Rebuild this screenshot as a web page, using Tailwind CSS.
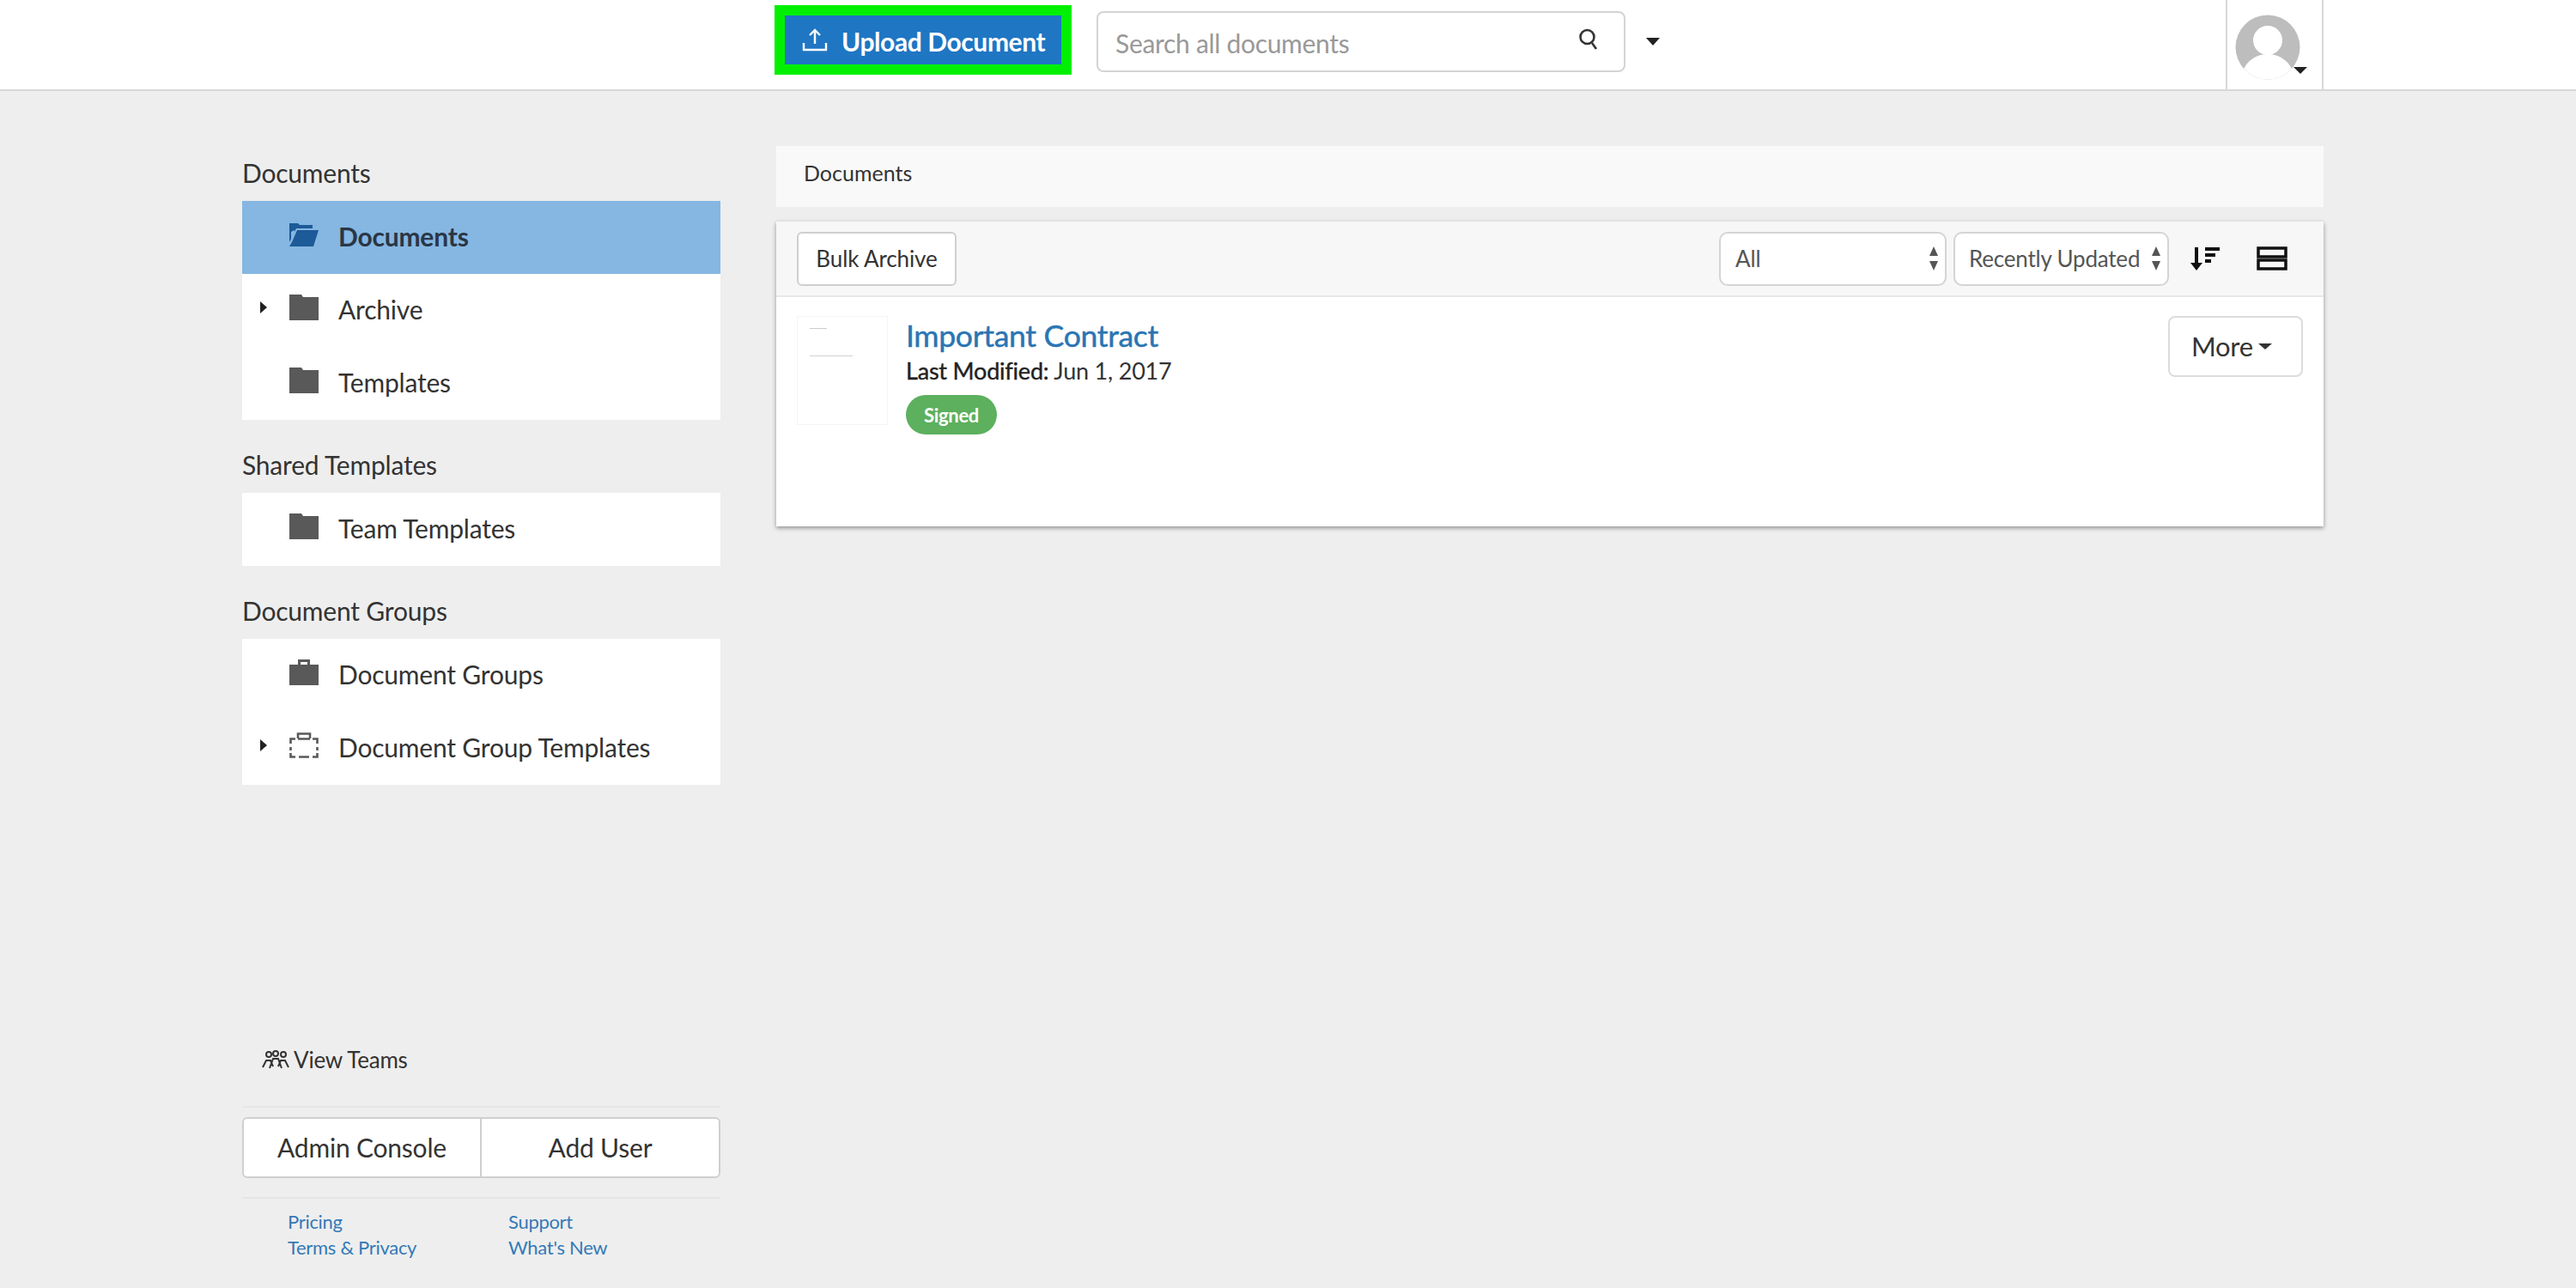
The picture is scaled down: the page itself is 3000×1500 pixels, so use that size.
<!DOCTYPE html>
<html lang="en">
<head>
    <meta charset="UTF-8">
    <title>Documents</title>
    <script src="https://cdn.jsdelivr.net/npm/@tailwindcss/browser@4"></script>
</head>
<body class="bg-[#eeeeee] h-[1500px] w-[3000px] overflow-hidden text-[#333333] [font-family:Lato,sans-serif]">
    <!-- Top bar -->
    <header class="h-[106px] bg-white border-b-2 border-[#d8d8d8] flex items-start pl-[902px]">
        <div class="mt-[6px] w-[346px] h-[81px] border-[12px] border-[#00f000] bg-[#1f76c3] flex items-center text-white font-bold text-[30px] tracking-[-0.4px] pl-[20px] pt-[3px]">
            <svg class="w-[30px] h-[30px] mr-[16px] mb-[5px]" viewBox="0 0 30 30" fill="none" stroke="white" stroke-width="2.4"><path d="M15 20V4M9 10l6-6 6 6"/><path d="M2 19v8h26v-8" /></svg>
            Upload Document
        </div>
        <div class="mt-[13px] ml-[29px] w-[616px] h-[71px] bg-white border-2 border-[#d4d4d4] rounded-[8px] flex items-center justify-between pl-[20px] pr-[28px]">
            <span class="text-[#999999] text-[30px] tracking-[-0.3px] pt-[3px]">Search all documents</span>
            <svg class="w-[26px] h-[28px] mb-[6px]" viewBox="0 0 26 28" fill="none" stroke="#333333" stroke-width="2.6"><circle cx="11.500" cy="11" r="8"/><path d="M17 18l5 7"/></svg>
        </div>
        <div class="mt-[44px] ml-[24px] w-0 h-0 border-x-[8px] border-x-transparent border-t-[9px] border-t-[#222222]"></div>
        <div class="ml-auto mr-[294px] w-[114px] h-[104px] bg-white border-x-2 border-[#d8d8d8] relative">
            <svg class="absolute left-[9px] top-[17px] w-[76px] h-[76px]" viewBox="0 0 76 76"><defs><clipPath id="c"><circle cx="38" cy="38" r="37.500"/></clipPath></defs><circle cx="38" cy="38" r="37.500" fill="#bdbdbd"/><g clip-path="url(#c)" fill="white"><circle cx="38" cy="30" r="17"/><ellipse cx="38" cy="73" rx="30" ry="27"/></g></svg>
            <div class="absolute left-[77px] top-[78px] w-0 h-0 border-x-[8px] border-x-transparent border-t-[8px] border-t-[#222222]"></div>
        </div>
    </header>

    <div class="flex pl-[282px] h-[1394px]">
        <!-- Sidebar -->
        <aside class="w-[557px] h-full flex flex-col pt-[78px] pb-[32px]">
            <h3 class="text-[30px] leading-[34px] tracking-[-0.2px] mb-[16px]">Documents</h3>
            <ul class="bg-white text-[30px] tracking-[-0.2px]">
                <li class="h-[85px] bg-[#85b7e2] flex items-center pl-[55px] pb-[2px] font-bold text-[#2a3645]">
                    <svg class="w-[34px] h-[30px] mr-[23px] mb-[6px]" viewBox="0 0 34 30" fill="#1c5a98"><path d="M0 2h10l2 2h15v4H8L0 24z"/><path d="M9 10h25l-6 19H0l3-5z"/><path d="M2 12l4-2v3l-4 9z" fill="#85b7e2"/></svg>
                    Documents
                </li>
                <li class="h-[85px] flex items-center pl-[21px] pb-[2px]">
                    <span class="w-0 h-0 mr-[26px] mb-[6px] border-y-[7px] border-y-transparent border-l-[8px] border-l-[#222222]"></span>
                    <svg class="w-[34px] h-[30px] mr-[23px] mb-[6px]" viewBox="0 0 34 30" fill="#595959"><path d="M0 0h14l2 3h18v27H0z"/></svg>
                    Archive
                </li>
                <li class="h-[85px] flex items-center pl-[55px] pb-[2px]">
                    <svg class="w-[34px] h-[30px] mr-[23px] mb-[6px]" viewBox="0 0 34 30" fill="#595959"><path d="M0 0h14l2 3h18v27H0z"/></svg>
                    Templates
                </li>
            </ul>

            <h3 class="mt-[35px] text-[30px] leading-[34px] tracking-[-0.2px] mb-[16px]">Shared Templates</h3>
            <ul class="bg-white text-[30px] tracking-[-0.2px]">
                <li class="h-[85px] flex items-center pl-[55px] pb-[2px]">
                    <svg class="w-[34px] h-[30px] mr-[23px] mb-[6px]" viewBox="0 0 34 30" fill="#595959"><path d="M0 0h14l2 3h18v27H0z"/></svg>
                    Team Templates
                </li>
            </ul>

            <h3 class="mt-[35px] text-[30px] leading-[34px] tracking-[-0.2px] mb-[16px]">Document Groups</h3>
            <ul class="bg-white text-[30px] tracking-[-0.2px]">
                <li class="h-[85px] flex items-center pl-[55px] pb-[2px]">
                    <svg class="w-[34px] h-[30px] mr-[23px] mb-[6px]" viewBox="0 0 34 30" fill="#595959"><path fill-rule="evenodd" d="M10 0h14v6h10v24H0V6h10zM13 3v3h8V3z"/></svg>
                    Document Groups
                </li>
                <li class="h-[85px] flex items-center pl-[21px] pb-[2px]">
                    <span class="w-0 h-0 mr-[26px] mb-[6px] border-y-[7px] border-y-transparent border-l-[8px] border-l-[#222222]"></span>
                    <svg class="w-[34px] h-[30px] mr-[23px] mb-[6px]" viewBox="0 0 34 30" fill="none" stroke="#595959" stroke-width="2.600"><path d="M10 7V1.500h14V7M1.500 13V7.500H7M10 7.500h14M27 7.500h5.500V13M1.500 17v4M32.500 17v4M1.500 24v4.500H7M11 28.500h12M27 28.500h5.500V24"/></svg>
                    Document Group Templates
                </li>
            </ul>

            <div class="mt-auto flex items-center pl-[23px] text-[26px] leading-[32px] tracking-[-0.2px] h-[32px]">
                <svg class="w-[32px] h-[22px] mr-[5px]" viewBox="0 0 32 22" fill="none" stroke="#333333" stroke-width="2"><circle cx="8" cy="5" r="3"/><circle cx="16" cy="4" r="3"/><circle cx="25" cy="5" r="3"/><path d="M1 20l4-8h5l3 7M9 21l4-11h6l4 11M19 19l3-7h5l4 8"/></svg>
                View Teams
            </div>
            <div class="mt-[38px] border-t-2 border-[#e6e6e6] pt-[11px]">
                <div class="flex h-[71px] bg-white border-2 border-[#cfcfcf] rounded-[6px] text-[30px] tracking-[-0.2px]">
                    <div class="w-[277px] flex items-center justify-center border-r-2 border-[#cfcfcf]">Admin Console</div>
                    <div class="flex-1 flex items-center justify-center">Add User</div>
                </div>
            </div>
            <div class="mt-[22px] border-t-2 border-[#e6e6e6] pt-[12px] pl-[53px] grid grid-cols-[257px_1fr] text-[22px] leading-[30px] text-[#337ab7] tracking-[-0.3px]">
                <a>Pricing</a><a>Support</a>
                <a>Terms &amp; Privacy</a><a>What's New</a>
            </div>
        </aside>

        <!-- Main column -->
        <main class="ml-[65px] w-[1802px] pt-[64px]">
            <div class="h-[71px] bg-[#f9f9f9] flex items-center pl-[32px] pb-[8px] text-[25px] tracking-[0px]">Documents</div>
            <section class="mt-[17px] h-[355px] bg-white shadow-[0_2px_5px_rgba(0,0,0,0.4)]">
                <div class="h-[88px] bg-[#f7f7f7] border-b-2 border-[#e8e8e8] flex items-center pl-[24px] pr-[42px] text-[26px] tracking-[-0.1px]">
                    <button class="w-[186px] h-[63px] bg-white border-2 border-[#cfcfcf] rounded-[6px]">Bulk Archive</button>
                    <div class="ml-auto w-[265px] h-[63px] bg-white border-2 border-[#d4d4d4] rounded-[10px] flex items-center justify-between pl-[17px] pr-[7px] text-[#555555]">
                        All
                        <svg class="w-[12px] h-[32px]" viewBox="0 0 12 32" fill="#555555"><path d="M6 2l5 11H1zM6 30L1 19h10z"/></svg>
                    </div>
                    <div class="ml-[8px] w-[251px] h-[63px] bg-white border-2 border-[#d4d4d4] rounded-[10px] flex items-center justify-between pl-[16px] pr-[7px] text-[#555555] tracking-[-0.2px]">
                        Recently Updated
                        <svg class="w-[12px] h-[32px]" viewBox="0 0 12 32" fill="#555555"><path d="M6 2l5 11H1zM6 30L1 19h10z"/></svg>
                    </div>
                    <svg class="ml-[25px] w-[34px] h-[28px]" viewBox="0 0 34 28" fill="#111111"><path d="M5 1h4v18h5l-7 9-7-9h5z"/><path d="M17 1h17v4H17zM17 8h12v4H17zM17 15h7v4h-7z"/></svg>
                    <svg class="ml-[43px] w-[36px] h-[28px]" viewBox="0 0 36 28" fill="none" stroke="#111111" stroke-width="3.500"><path d="M2 2h32v10H2zM2 16h32v10H2z"/></svg>
                </div>
                <div class="flex items-start pt-[22px] pl-[24px] pr-[24px]">
                    <div class="w-[106px] h-[127px] border border-[#f4f4f4] relative">
                        <div class="absolute left-[14px] top-[13px] w-[20px] h-px bg-[#cccccc]"></div>
                        <div class="absolute left-[14px] top-[45px] w-[50px] h-px bg-[#d0d0d0]"></div>
                    </div>
                    <div class="ml-[21px] flex flex-col items-start">
                        <a class="text-[#2a75b3] text-[35.5px] leading-[40px] tracking-[-0.3px] mt-[3px] [-webkit-text-stroke:0.5px_#2a75b3]">Important Contract</a>
                        <p class="text-[27px] leading-[36px] mt-[3px] tracking-[-0.2px]"><b class="font-normal text-[#222222] [-webkit-text-stroke:0.4px_#222222]">Last Modified:</b> Jun 1, 2017</p>
                        <span class="mt-[10px] w-[106px] h-[46px] rounded-full bg-[#5cb05e] text-white text-[22px] font-bold flex items-center justify-center tracking-[-0.3px]">Signed</span>
                    </div>
                    <button class="ml-auto w-[157px] h-[71px] bg-white border-2 border-[#dcdcdc] rounded-[8px] text-[31px] tracking-[-0.3px] flex items-center justify-start pl-[25px]">
                        More
                        <span class="ml-[6px] w-0 h-0 border-x-[8px] border-x-transparent border-t-[7px] border-t-[#333333]"></span>
                    </button>
                </div>
            </section>
        </main>
    </div>
</body>
</html>
